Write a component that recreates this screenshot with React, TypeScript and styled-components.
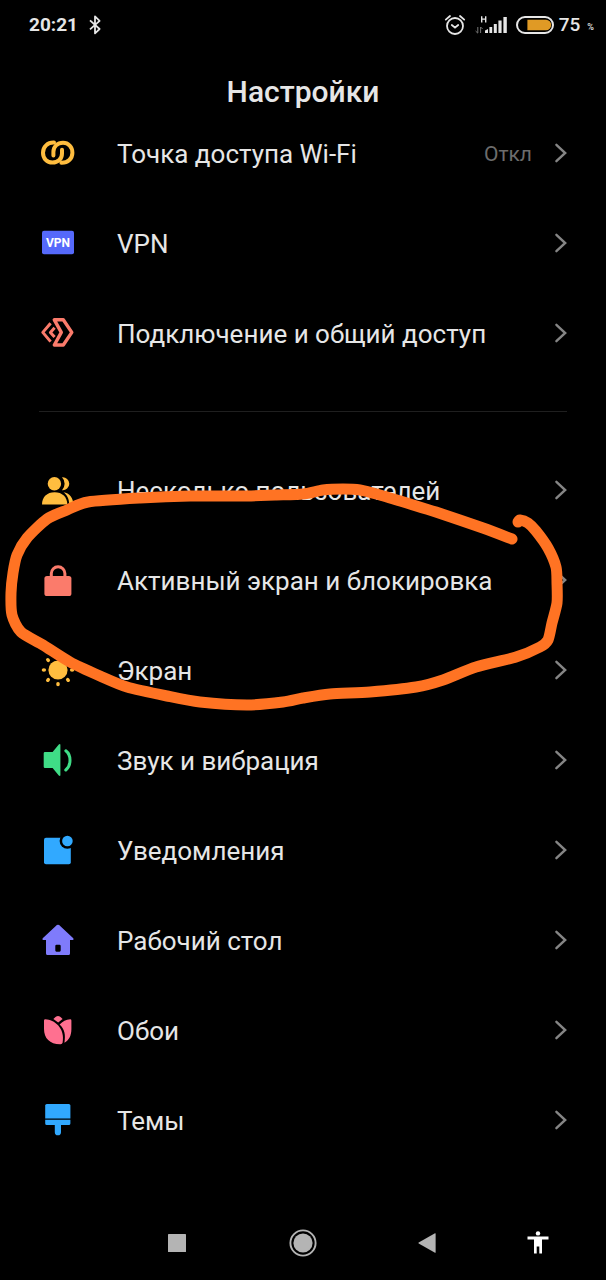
import React from "react";
import styled, { createGlobalStyle } from "styled-components";

const GlobalStyle = createGlobalStyle`
  * { box-sizing: border-box; }
  html, body { margin: 0; background: #000; }
  body { font-family: Roboto, "Noto Sans", sans-serif; color: #e6e6e6; }
  button { font: inherit; color: inherit; background: none; border: 0; padding: 0; cursor: pointer; }
`;

const Screen = styled.div`
  min-height: 100vh;
  display: flex;
  flex-direction: column;
  background: #000;
`;

const StatusBar = styled.div`
  height: 50px;
  padding: 0 12px 0 29px;
  display: flex;
  align-items: center;
  justify-content: space-between;
`;

const StatusGroup = styled.div<{ $gap: number }>`
  display: flex;
  align-items: center;
  gap: ${(p) => p.$gap}px;
`;

const StatusText = styled.span<{ $weight: number }>`
  font-size: 19px;
  line-height: 24px;
  font-weight: ${(p) => p.$weight};
`;

const Percent = styled.span`
  font-size: 9px;
  line-height: 12px;
  padding-top: 4px;
  font-weight: 500;
`;

const Title = styled.h1`
  margin: 0;
  padding-top: 26px;
  font-size: 30px;
  line-height: 32px;
  font-weight: 500;
  text-align: center;
`;

const Main = styled.main`
  flex: 1;
`;

const Group = styled.ul`
  position: relative;
  list-style: none;
  margin: 0;
  padding: 0;
`;

const Divider = styled.hr`
  margin: 33px 39px;
  border: 0;
  height: 1px;
  background: #1f1f1f;
`;

const RowButton = styled.button`
  width: 100%;
  height: 90px;
  padding: 0 38px 0 34px;
  display: flex;
  align-items: center;
  text-align: left;
`;

const RowIcon = styled.svg`
  width: 48px;
  height: 48px;
  flex: none;
  margin-right: 35px;
`;

const RowLabel = styled.span`
  flex: 1;
  padding-top: 2px;
  font-size: 26px;
  line-height: 32px;
`;

const RowValue = styled.span`
  padding-top: 2px;
  font-size: 21px;
  line-height: 32px;
  color: #6c6c6c;
  margin-right: 22px;
`;

const Chevron = styled.svg`
  width: 14px;
  height: 20px;
  flex: none;
`;

const Marker = styled.svg`
  position: absolute;
  top: 0;
  left: 0;
  overflow: visible;
  pointer-events: none;
`;

const NavBar = styled.nav`
  height: 74px;
  padding: 0 18px 0 114px;
  display: grid;
  grid-template-columns: 126fr 126fr 122fr 100fr;
`;

const NavButton = styled.button`
  display: flex;
  align-items: center;
  justify-content: center;
`;

const YELLOW = "#ffbd3f";
const CORAL = "#fb7b6b";
const BLUE = "#31a9ff";

const hotspotLoop =
  "M20 13.6C13.5 13.4 9 17.8 9 23.7C9 29.6 13 33.6 18.4 33.6C24 33.6 28 29.8 28 24.4V20.8";

const icons: Record<string, React.ReactNode> = {
  hotspot: (
    <g fill="none" stroke={YELLOW} strokeWidth="4" strokeLinecap="round">
      <path d={hotspotLoop} />
      <path d={hotspotLoop} transform="rotate(180 23.7 23.7)" />
    </g>
  ),
  vpn: (
    <>
      <rect x="8" y="11.7" width="32" height="23.6" rx="2" fill="#5569fb" />
      <text x="24" y="28" textAnchor="middle" fontSize="12" fontWeight="700" fill="#fff">
        VPN
      </text>
    </>
  ),
  share: (
    <g fill="none" stroke={CORAL} strokeWidth="3.4" strokeLinejoin="round">
      <path d="M20.3 10.8H29.3L37.8 23.4L29.3 36H20.3L27.3 23.4Z" />
      <path d="M16.6 14.2L8.8 23.4L16.6 32.6" strokeWidth="3" />
      <path d="M20.6 18.8L16.4 23.4L20.6 28" strokeWidth="3" />
    </g>
  ),
  users: (
    <>
      <path fill={YELLOW} d="M28 11.3A6.5 6.5 0 1 1 28 24.2Q30.6 21.5 30.6 17.7Q30.6 14 28 11.3Z" />
      <path fill={YELLOW} d="M29.5 26.2C35.5 27 39.3 32 39.3 38.4H35.2C35.2 33 33 28.6 29.5 26.2Z" />
      <circle cx="20.4" cy="17.7" r="6.7" fill={YELLOW} />
      <path fill={YELLOW} d="M8 38.4C8 31 13 26.2 20.6 26.2S33.3 31 33.3 38.4Z" />
    </>
  ),
  lock: (
    <>
      <rect x="10.4" y="20" width="27" height="20" rx="2.6" fill={CORAL} />
      <path d="M17.3 22V17.5A6.8 6.8 0 0 1 30.9 17.5V22" fill="none" stroke={CORAL} strokeWidth="3" />
    </>
  ),
  sun: (
    <g fill={YELLOW}>
      <circle cx="24" cy="24" r="9.6" />
      {[0, 45, 90, 135, 180, 225, 270, 315].map((a) => (
        <ellipse key={a} cx="24" cy="9.9" rx="1.8" ry="2.2" transform={`rotate(${a} 24 24)`} />
      ))}
    </g>
  ),
  sound: (
    <>
      <path
        fill="#3fdc86"
        d="M11 16H18.6L24.8 8.4Q26.4 7.4 26.4 9V39Q26.4 40.6 24.8 39.6L18.6 32H11Q9.7 32 9.7 30.8V17.2Q9.7 16 11 16Z"
      />
      <path d="M31.8 14.8C37.4 19 37.4 29.4 31.8 34" fill="none" stroke="#3fdc86" strokeWidth="3" strokeLinecap="round" />
    </>
  ),
  notifications: (
    <>
      <rect x="10" y="11.8" width="26.8" height="26.4" rx="2" fill={BLUE} />
      <circle cx="33.4" cy="15" r="7.8" fill="#000" />
      <circle cx="33.4" cy="15" r="5.3" fill={BLUE} />
    </>
  ),
  home: (
    <path
      fill="#7f7bfb"
      fillRule="evenodd"
      d="M22.9 9.1Q24 8.2 25.1 9.1L39.3 22.3Q40.2 23.8 38.8 23.9H36V37.4Q36 39 34.4 39H13.6Q12 39 12 37.4V23.9H9.2Q7.8 23.8 8.7 22.3ZM22.4 28.8Q21.3 28.8 21.3 29.9V34.6Q21.3 35.7 22.4 35.7H25.6Q26.7 35.7 26.7 34.6V29.9Q26.7 28.8 25.6 28.8Z"
    />
  ),
  wallpaper: (
    <g fill="#ff7090">
      <path d="M10 14.6Q10 13.2 11.4 13.2C20 13.4 31.6 22 28.6 36.8Q28.2 38.2 26.6 38.2C16 38.4 10 32.5 10 23Z" />
      <path d="M25.6 18.4Q30 13.8 36.2 13.2Q37.4 13.2 37.4 14.6V23C37.4 29.6 35 34.4 30.4 36.8C31.8 29 30.7 22.8 25.6 18.4Z" />
      <path d="M19.4 13Q21.8 10.2 24 10Q26.2 10.2 28.6 13L24.2 16.6Z" />
    </g>
  ),
  themes: (
    <g fill={BLUE}>
      <path d="M11.2 22.4V9.6Q11.2 8 12.8 8H34.8Q36.4 8 36.4 9.6V22.4Z" />
      <path d="M11.2 23.8H36.4V27.4Q36.4 29 34.8 29H27V36.2A3.1 3.1 0 0 1 20.8 36.2V29H12.8Q11.2 29 11.2 27.4Z" />
    </g>
  ),
};

type Item = { icon: string; label: string; value?: string };

const network: Item[] = [
  { icon: "hotspot", label: "Точка доступа Wi-Fi", value: "Откл" },
  { icon: "vpn", label: "VPN" },
  { icon: "share", label: "Подключение и общий доступ" },
];

const device: Item[] = [
  { icon: "users", label: "Несколько пользователей" },
  { icon: "lock", label: "Активный экран и блокировка" },
  { icon: "sun", label: "Экран" },
  { icon: "sound", label: "Звук и вибрация" },
  { icon: "notifications", label: "Уведомления" },
  { icon: "home", label: "Рабочий стол" },
  { icon: "wallpaper", label: "Обои" },
  { icon: "themes", label: "Темы" },
];

const Row = ({ icon, label, value }: Item) => (
  <li>
    <RowButton type="button">
      <RowIcon viewBox="0 0 48 48" aria-hidden="true">
        {icons[icon]}
      </RowIcon>
      <RowLabel>{label}</RowLabel>
      {value && <RowValue>{value}</RowValue>}
      <Chevron viewBox="0 0 14 20" aria-hidden="true">
        <path d="M2.4 1.8L11.2 10L2.4 18.2" fill="none" stroke="#858585" strokeWidth="2.4" strokeLinecap="round" />
      </Chevron>
    </RowButton>
  </li>
);

// Hand-drawn loop around the lock screen row, relative to the top of its group.
const loop: [number, number][] = [
  [512, 94], [483, 83], [436, 67], [410, 59], [380, 50], [360, 45], [343, 44], [323, 45], [303, 49],
  [275, 50], [247, 51], [190, 51], [140, 53], [88, 57], [67, 65], [47, 74], [27, 93], [17, 110],
  [13, 128], [11, 148], [12, 170], [21, 187], [43, 200], [70, 217], [100, 231], [127, 242],
  [167, 251], [200, 257], [247, 260], [283, 257], [303, 253], [330, 249], [370, 247], [416, 242],
  [443, 235], [476, 222], [516, 212], [540, 202], [548, 195], [552, 178], [557, 158], [557, 138],
  [556, 122], [548, 103], [536, 86], [528, 78], [520, 75], [518, 77],
];

const smooth = (pts: [number, number][]) => {
  let d = `M${pts[0][0]} ${pts[0][1]}`;
  for (let i = 0; i < pts.length - 1; i++) {
    const a = pts[Math.max(i - 1, 0)];
    const b = pts[i];
    const c = pts[i + 1];
    const e = pts[Math.min(i + 2, pts.length - 1)];
    d += `C${b[0] + (c[0] - a[0]) / 8} ${b[1] + (c[1] - a[1]) / 8} ${c[0] - (e[0] - b[0]) / 8} ${
      c[1] - (e[1] - b[1]) / 8
    } ${c[0]} ${c[1]}`;
  }
  return d;
};

export default function App() {
  return (
    <Screen>
      <GlobalStyle />
      <StatusBar>
        <StatusGroup $gap={11}>
          <StatusText $weight={700}>20:21</StatusText>
          <svg width="12" height="20" viewBox="0 0 12 20" fill="none" stroke="#e6e6e6" strokeWidth="1.8" strokeLinejoin="round">
            <path d="M1 5.4L10.6 14L6 18.4V1.4L10.6 5.8L1 14.4" />
          </svg>
        </StatusGroup>
        <StatusGroup $gap={8}>
          <svg width="22" height="22" viewBox="0 0 22 22" fill="none" stroke="#e6e6e6" strokeWidth="1.8" strokeLinecap="round">
            <circle cx="11" cy="12" r="8" />
            <path d="M1.8 5.6L6 2M20.2 5.6L16 2M7.8 11L11 13.6L14.2 11" />
          </svg>
          <svg width="34" height="20" viewBox="0 0 34 20" fill="#e6e6e6">
            <path d="M7 1.2H8.4V3.4H11V1.2H12.4V7.4H11V4.8H8.4V7.4H7Z" />
            <path d="M3.8 12V18M1.6 16L3.8 18.2M6.6 18V12M6.6 12L8.6 14" fill="none" stroke="#777" strokeWidth="1" />
            <path d="M11 18V15.4L14 14V18ZM15.4 18V12H18.2V18ZM19.8 18V9H22.8V18ZM24.4 18V5.6H27.6V18ZM29.4 18V2H32.8V18Z" />
          </svg>
          <StatusGroup $gap={5}>
            <svg width="38" height="18" viewBox="0 0 38 18">
              <rect x="1" y="1" width="36" height="16" rx="8" fill="none" stroke="#e6e6e6" strokeWidth="2" />
              <path d="M11.4 3.8H30A5.2 5.2 0 0 1 30 14.2H11.4Z" fill="#e09a25" />
            </svg>
            <StatusGroup $gap={7}>
              <StatusText $weight={500}>75</StatusText>
              <Percent>%</Percent>
            </StatusGroup>
          </StatusGroup>
        </StatusGroup>
      </StatusBar>
      <Title>Настройки</Title>
      <Main>
        <Group>
          {network.map((item) => (
            <Row key={item.icon} {...item} />
          ))}
        </Group>
        <Divider />
        <Group>
          {device.map((item) => (
            <Row key={item.icon} {...item} />
          ))}
          <Marker as="svg" width="606" height="275" viewBox="0 0 606 275" aria-hidden="true">
            <path d={smooth(loop)} fill="none" stroke="#ff7323" strokeWidth="11" strokeLinecap="round" strokeLinejoin="round" />
          </Marker>
        </Group>
      </Main>
      <NavBar>
        <NavButton type="button" aria-label="Недавние">
          <svg width="18" height="18" viewBox="0 0 18 18">
            <rect width="18" height="18" rx="0.6" fill="#b4b4b4" />
          </svg>
        </NavButton>
        <NavButton type="button" aria-label="Домой">
          <svg width="28" height="28" viewBox="0 0 28 28">
            <circle cx="14" cy="14" r="12.6" fill="none" stroke="#b4b4b4" strokeWidth="1.9" />
            <circle cx="14" cy="14" r="9.6" fill="#b4b4b4" />
          </svg>
        </NavButton>
        <NavButton type="button" aria-label="Назад">
          <svg width="18" height="20" viewBox="0 0 18 20">
            <path d="M17.6 0.8V19.4Q17.6 20 17 19.7L0.7 10.6Q0 10 0.7 9.5L17 0.3Q17.6 0 17.6 0.8Z" fill="#b4b4b4" />
          </svg>
        </NavButton>
        <NavButton type="button" aria-label="Специальные возможности">
          <svg width="22" height="24" viewBox="0 0 22 24" fill="#fff">
            <circle cx="11" cy="2.4" r="2.2" />
            <path d="M0.5 5.6H21.5V8.4H15V22.4H12.3V15.6H9.7V22.4H7V8.4H0.5Z" />
          </svg>
        </NavButton>
      </NavBar>
    </Screen>
  );
}
